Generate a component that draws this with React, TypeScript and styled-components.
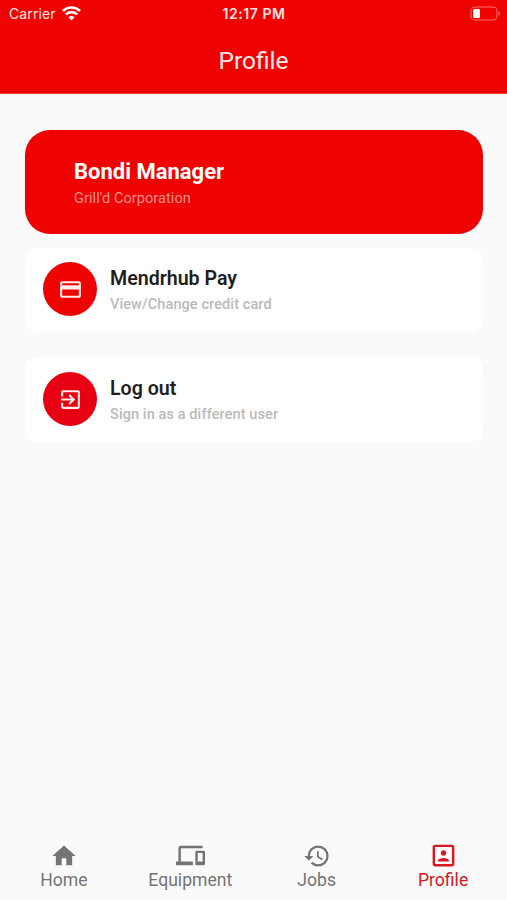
import React from "react";
import styled, { createGlobalStyle } from "styled-components";

const GlobalStyle = createGlobalStyle`
  * { box-sizing: border-box; }
  body { margin: 0; background: #fafafa; font-family: Roboto, sans-serif; }
`;

const Screen = styled.div`
  display: flex;
  flex-direction: column;
  width: 507px;
  height: 900px;
  overflow: hidden;
  background: #fafafa;
`;

const Header = styled.header`
  height: 94px;
  flex: none;
  background: #ee0300;
  color: #fff;
  border-bottom: 1px solid #f43b38;
`;

const StatusBar = styled.div`
  display: grid;
  grid-template-columns: 1fr auto 1fr;
  align-items: center;
  height: 27px;
  padding: 0 8px 0 9px;
  font-family: Inter, sans-serif;
  font-size: 14px;
  color: #ffe4e2;
`;

const Carrier = styled.div`
  display: flex;
  align-items: center;
  gap: 6px;
  letter-spacing: 0.12px;
`;

const Clock = styled.div`
  font-size: 14px;
  font-weight: 600;
  letter-spacing: 0.55px;
`;

const BatterySlot = styled.div`
  display: flex;
  justify-content: flex-end;
  margin-right: -2px;
`;

const Title = styled.h1`
  margin: 0;
  padding-top: 18px;
  text-align: center;
  font-size: 24.5px;
  line-height: 32px;
  font-weight: 400;
  color: #ffe9e8;
`;

const Content = styled.main`
  flex: 1;
  display: flex;
  flex-direction: column;
  padding: 36px 24px 0 25px;
`;

const AccountCard = styled.section`
  height: 104px;
  flex: none;
  padding: 28px 49px;
  border-radius: 25px;
  background: #ee0300;
  margin-bottom: 14px;
`;

const AccountName = styled.h2`
  margin: 0;
  font-size: 22px;
  line-height: 28px;
  font-weight: 700;
  color: #fff;
`;

const Company = styled.p`
  margin: 4px 0 0;
  font-size: 14.5px;
  line-height: 18px;
  letter-spacing: 0.08px;
  color: #ff8f8c;
`;

const ActionCard = styled.section`
  display: flex;
  align-items: center;
  gap: 13px;
  height: 84px;
  flex: none;
  padding: 0 18px 2px;
  border-radius: 13px;
  background: #fff;
  margin-bottom: 25px;
`;

const IconDisc = styled.div<{ $color: string }>`
  display: flex;
  align-items: center;
  justify-content: center;
  width: 54px;
  height: 54px;
  border-radius: 50%;
  background: ${(p) => p.$color};
  color: #ffeceb;
`;

const ActionTitle = styled.h3`
  margin: 1px 0 0;
  font-size: 19.6px;
  line-height: 26px;
  font-weight: 600;
  color: #1e1e1e;
`;

const ActionNote = styled.p`
  margin: 4px 0 -1px;
  font-size: 14.5px;
  line-height: 18px;
  font-weight: 500;
  letter-spacing: 0.1px;
  color: #bababa;
`;

const ActionList = styled.div`
  display: flex;
  flex-direction: column;

  & > ${ActionCard}:last-child {
    height: 85px;
    padding-bottom: 1px;
  }
`;

const TabBar = styled.nav`
  display: grid;
  grid-template-columns: repeat(4, 126.4px);
  justify-content: center;
  height: 72px;
  flex: none;
  border-top: 1px solid #f6f6f6;
`;

const Tab = styled.div<{ $active?: boolean }>`
  display: flex;
  flex-direction: column;
  align-items: center;
  padding-top: 12px;
  color: ${(p) => (p.$active ? "#db1522" : "#747474")};
`;

const TabIcon = styled.div`
  display: flex;
  align-items: center;
  height: 29px;
`;

const TabLabel = styled.span`
  font-size: 17.6px;
  line-height: 20px;
`;

const paths = {
  card: "M20 4H4c-1.11 0-1.99.89-1.99 2L2 18c0 1.11.89 2 2 2h16c1.11 0 2-.89 2-2V6c0-1.11-.89-2-2-2zm0 14H4v-6h16v6zm0-10H4V6h16v2z",
  exit: "M10.09 15.59L11.5 17l5-5-5-5-1.41 1.41L12.67 11H3v2h9.67l-2.58 2.59zM19 3H5c-1.11 0-2 .9-2 2v4h2V5h14v14H5v-4H3v4c0 1.1.89 2 2 2h14c1.1 0 2-.9 2-2V5c0-1.1-.9-2-2-2z",
  home: "M10 20v-6h4v6h5v-8h3L12 3 2 12h3v8z",
  devices: "M4 6h18V4H4c-1.1 0-2 .9-2 2v11H0v3h14v-3H4V6zm19 2h-6c-.55 0-1 .45-1 1v10c0 .55.45 1 1 1h6c.55 0 1-.45 1-1V9c0-.55-.45-1-1-1zm-1 9h-4v-7h4v7z",
  history: "M13 3a9 9 0 0 0-9 9H1l3.89 3.89.07.14L9 12H6c0-3.87 3.13-7 7-7s7 3.13 7 7-3.13 7-7 7c-1.93 0-3.68-.79-4.94-2.06l-1.42 1.42A8.954 8.954 0 0 0 13 21a9 9 0 0 0 0-18zm-1 5v5l4.28 2.54.72-1.21-3.5-2.08V8H12z",
  portrait: "M12 12.25c1.24 0 2.25-1.01 2.25-2.25S13.24 7.75 12 7.75 9.75 8.76 9.75 10s1.01 2.25 2.25 2.25zm4.5 4c0-1.5-3-2.25-4.5-2.25s-4.5.75-4.5 2.25V17h9v-.75zM19 3H5c-1.1 0-2 .9-2 2v14c0 1.1.9 2 2 2h14c1.1 0 2-.9 2-2V5c0-1.1-.9-2-2-2zm0 16H5V5h14v14z",
};

type IconName = keyof typeof paths;

const Icon = ({ name, size }: { name: IconName; size: number }) => (
  <svg width={size} height={size} viewBox="0 0 24 24" fill="currentColor" overflow="visible">
    <path d={paths[name]} />
  </svg>
);

const WifiIcon = () => (
  <svg width="19" height="15" viewBox="0 0 19 15" fill="none" stroke="#fff" strokeWidth="2.7">
    <path d="M1 5a12.1 12.1 0 0 1 17 0" />
    <path d="M3.9 8.4a7.8 7.8 0 0 1 11.2 0" />
    <path d="M9.5 14.4 6.400 11.300a4.300 4.300 0 0 1 6.200 0z" fill="#fff" stroke="none" />
  </svg>
);

const BatteryIcon = () => (
  <svg width="31" height="15" viewBox="0 0 31 15">
    <rect x="1" y="1" width="26" height="13" rx="3.5" fill="none" stroke="#f8706d" />
    <rect x="3" y="3" width="7" height="9" rx="1.5" fill="#fff" />
    <path d="M28.5 5.2v4.6c1-.4 1.6-1.3 1.6-2.3s-.6-1.9-1.6-2.3z" fill="#f8706d" />
  </svg>
);

const actions: { icon: IconName; color: string; title: string; note: string }[] = [
  { icon: "card", color: "#ee0300", title: "Mendrhub Pay", note: "View/Change credit card" },
  { icon: "exit", color: "#e60012", title: "Log out", note: "Sign in as a different user" },
];

const tabs: { icon: IconName; label: string; size: number; active?: boolean }[] = [
  { icon: "home", label: "Home", size: 28 },
  { icon: "devices", label: "Equipment", size: 29 },
  { icon: "history", label: "Jobs", size: 28 },
  { icon: "portrait", label: "Profile", size: 29, active: true },
];

export default function App() {
  return (
    <Screen>
      <GlobalStyle />
      <Header>
        <StatusBar>
          <Carrier>
            Carrier
            <WifiIcon />
          </Carrier>
          <Clock>12:17 PM</Clock>
          <BatterySlot>
            <BatteryIcon />
          </BatterySlot>
        </StatusBar>
        <Title>Profile</Title>
      </Header>
      <Content>
        <AccountCard>
          <AccountName>Bondi Manager</AccountName>
          <Company>Grill'd Corporation</Company>
        </AccountCard>
        <ActionList>
          {actions.map((a) => (
            <ActionCard key={a.title}>
              <IconDisc $color={a.color}>
                <Icon name={a.icon} size={25} />
              </IconDisc>
              <div>
                <ActionTitle>{a.title}</ActionTitle>
                <ActionNote>{a.note}</ActionNote>
              </div>
            </ActionCard>
          ))}
        </ActionList>
      </Content>
      <TabBar>
        {tabs.map((t) => (
          <Tab key={t.label} $active={t.active}>
            <TabIcon>
              <Icon name={t.icon} size={t.size} />
            </TabIcon>
            <TabLabel>{t.label}</TabLabel>
          </Tab>
        ))}
      </TabBar>
    </Screen>
  );
}
